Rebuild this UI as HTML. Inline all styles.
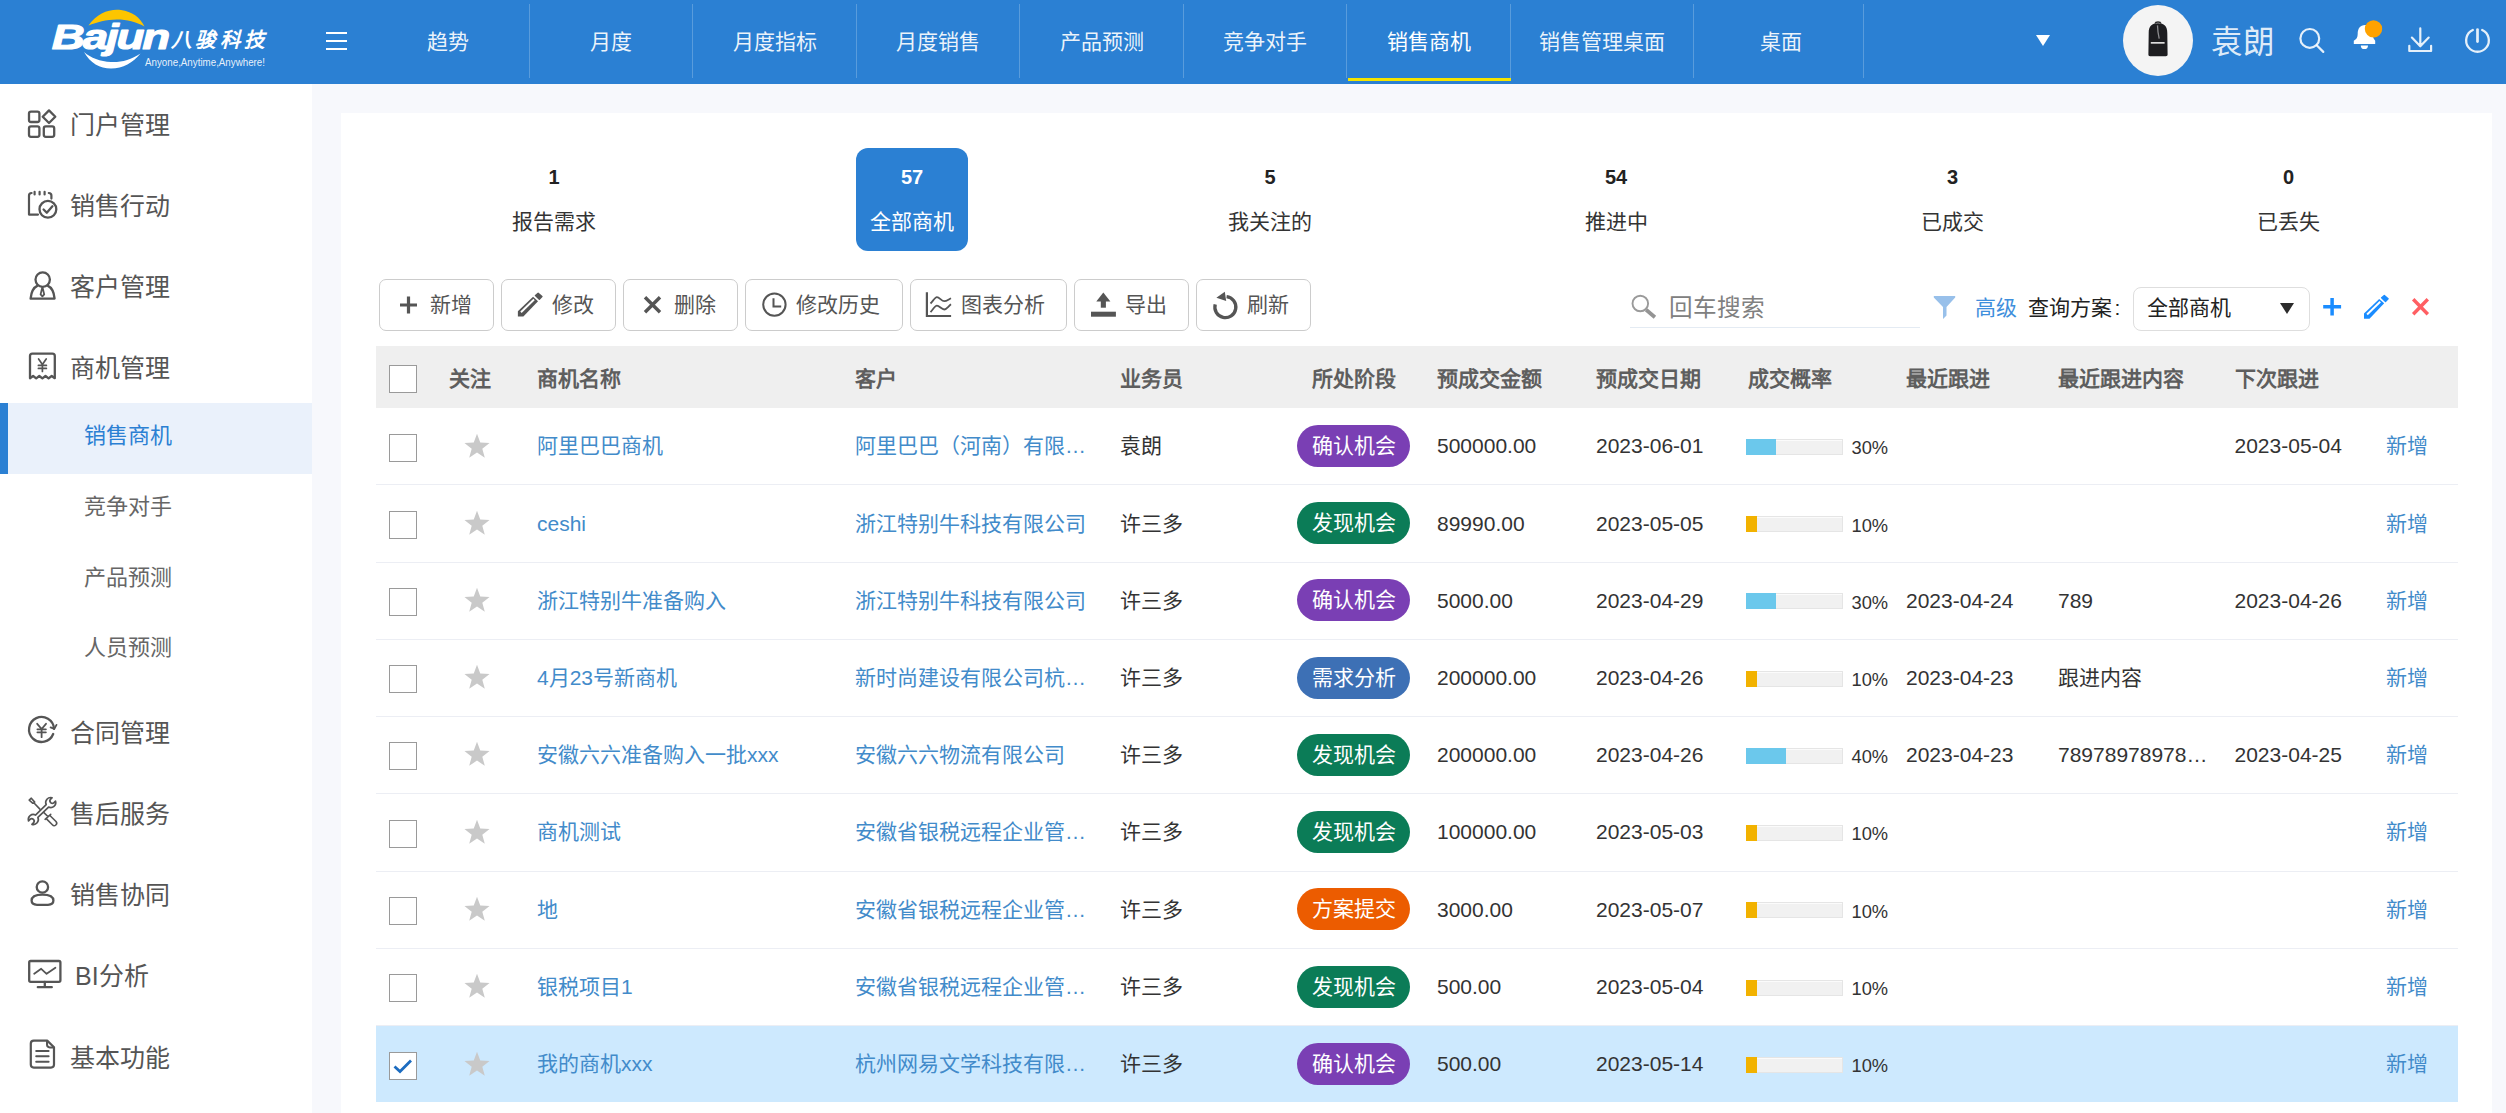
<!DOCTYPE html>
<html lang="zh-CN">
<head>
<meta charset="utf-8">
<title>销售商机</title>
<style>
*{box-sizing:border-box;margin:0;padding:0}
html,body{width:2506px;height:1113px;overflow:hidden}
body{font-family:"Liberation Sans",sans-serif;background:#f7f8fc;color:#333;position:relative;font-size:21px}
a{text-decoration:none;color:inherit}
/* ---------- header ---------- */
#hd{position:absolute;left:0;top:0;width:2506px;height:84px;background:#2b80d3;color:#fff}
#logo{position:absolute;left:0;top:0;width:312px;height:84px}
#burger{position:absolute;left:326px;top:32px;width:21px;height:19px}
#burger i{position:absolute;left:0;width:21px;height:2px;background:#fff}
#nav{position:absolute;left:366px;top:0;height:84px;display:flex}
#nav .t{height:84px;position:relative;text-align:center;font-size:21px;line-height:83.4px;color:rgba(255,255,255,.92);white-space:nowrap}
#nav .t::after{content:"";position:absolute;right:0;top:4px;width:1px;height:74px;background:rgba(255,255,255,.22)}
#nav .t.on{color:#fff}
#nav .t.on::before{content:"";position:absolute;left:1px;right:0;top:78px;height:3px;background:#f5e400}
#dd{position:absolute;left:2036px;top:35px;width:0;height:0;border-left:7.5px solid transparent;border-right:7.5px solid transparent;border-top:11px solid #fff}
#ava{position:absolute;left:2123px;top:5px;width:70px;height:71px;border-radius:50%;background:#f4f4f4;overflow:hidden}
#uname{position:absolute;left:2210.5px;top:23px;font-size:31.5px;line-height:38px;color:rgba(255,255,255,.86);white-space:nowrap}
.hi{position:absolute;top:0;left:0}
/* ---------- sidebar ---------- */
#sb{position:absolute;left:0;top:84px;width:312px;height:1029px;background:#fff}
.mi{position:absolute;left:0;width:312px;height:60px;line-height:60px;font-size:25px;color:#555;padding-left:70px;white-space:nowrap}
.si{position:absolute;left:0;width:312px;height:70px;line-height:68px;font-size:22px;color:#666;padding-left:84px;white-space:nowrap}
.si.on{background:#eaf1fb;color:#2b80d3;border-left:8px solid #2b80d3;padding-left:76px;height:71px;line-height:66px}
/* ---------- main ---------- */
#panel{position:absolute;left:341px;top:113px;width:2151px;height:1000px;background:#fff}
/* stats */
.st{position:absolute;top:35px;height:103px;text-align:center;border-radius:12px;white-space:nowrap}
.st b{display:block;font-size:20px;line-height:24px;margin-top:16.5px;color:#222}
.st span{display:block;font-size:21px;line-height:26px;margin-top:20.3px;color:#333}
.st.on{background:#2b80d3}
.st.on b,.st.on span{color:#fff}
/* toolbar */
.btn{position:absolute;top:166px;height:52px;border:1px solid #ccc;border-radius:7px;background:#fff;font-size:21px;line-height:49px;color:#555;white-space:nowrap}
.btn svg{position:absolute;top:0;left:0}
.btn span{position:absolute;top:0}
#srch{position:absolute;left:1289px;top:213.5px;width:290px;height:1px;background:#e4ebf3}
#ph{position:absolute;left:1327.5px;top:179.5px;font-size:23.6px;line-height:30px;color:#808080;white-space:nowrap}
#adv{position:absolute;left:1633.5px;top:180.8px;font-size:21px;line-height:28px;color:#3f8fdc;white-space:nowrap}
#qlab{position:absolute;left:1686.5px;top:180.8px;font-size:21px;line-height:28px;color:#222;white-space:nowrap}
#sel{position:absolute;left:1792px;top:174px;width:177px;height:44px;border:1px solid #dedede;border-radius:8px;font-size:21px;line-height:40.4px;padding-left:12.5px;color:#222;white-space:nowrap}
#sel i{position:absolute;left:146px;top:15px;width:0;height:0;border-left:7.5px solid transparent;border-right:7.5px solid transparent;border-top:11px solid #2c2c2c}
.tbi{position:absolute;left:0;top:0}
/* table */
#tb{position:absolute;left:35px;top:233px;width:2082px}
#th{position:relative;height:61.6px;background:#efefef;font-weight:bold;color:#5e5e5e;font-size:21px;line-height:61px}
#th span{position:absolute;top:2px;white-space:nowrap}
.cb{position:absolute;left:13px;width:28px;height:28px;border:1.5px solid #9a9a9a;background:#fff}
.r{position:absolute;left:0;width:2082px;border-bottom:1px solid #eceef4;font-size:21px;line-height:76.6px;color:#333}
.r.sel{background:#cde9fe;border-bottom:0}
.r>*{position:absolute;top:0;white-space:nowrap}

.r .star{left:87.7px;width:26px;height:26px}
.r a{color:#428bca}
.c3{left:161px}.c4{left:479px}.c5{left:743.5px}.c7{left:1061px}.c8{left:1220px}.c10{left:1530px}.c11{left:1682px}.c12{left:1858.5px}.c13{left:2010px}
.bd{left:921px;width:113px;height:42px;border-radius:21px;color:#fff;text-align:center;line-height:41px}
.p1{background:#7a3fb4}.p2{background:#0b7c57}.p3{background:#3d70b5}.p4{background:#ec5c00}
.bar{left:1370px;width:97px;height:16px;background:#f1f1f1;border:1px solid #e5e5e5;box-shadow:inset 0 1px 0 #fbfbfb}
.bar i{position:absolute;left:-1px;top:-1px;height:16px}
.bl{background:#6bc8ec}.ye{background:#f2b200}
.pc{left:1475.5px;font-size:18.3px}
</style>
</head>
<body>
<div id="hd">
  <div id="logo">
    <svg width="312" height="84" viewBox="0 0 312 84">
      <path d="M88.5 25.5 C97 13 110 8.5 121 10 C132 11.5 140 17 144.5 26.5 C136 21.5 127 19.4 117 19.4 C106 19.6 97 22 88.5 25.5Z" fill="#fdc500"/>
      <path d="M84 52 C90 63 100 68.5 111 68.5 C123 68.5 133 62.5 140.5 53.5 C131 60 121 62.5 111 62 C100 61.5 91 58 84 52Z" fill="#fff"/>
      <text x="0" y="0" transform="translate(51.8,48.7) scale(1.325,1)" font-family="Liberation Sans, sans-serif" font-weight="bold" font-style="italic" font-size="34.5" fill="#fff" stroke="#fff" stroke-width="1.1" stroke-linejoin="round" letter-spacing="-1.6">Bajun</text>
      <text x="171" y="47.4" font-family="Liberation Sans, sans-serif" font-weight="bold" font-style="italic" font-size="20.5" fill="#fff" letter-spacing="4.3">八骏科技</text>
      <text x="145" y="66" font-family="Liberation Sans, sans-serif" font-size="10.2" fill="#fff" fill-opacity=".9" textLength="120" lengthAdjust="spacingAndGlyphs">Anyone,Anytime,Anywhere!</text>
    </svg>
  </div>
  <div id="burger"><i style="top:0"></i><i style="top:8px"></i><i style="top:16px"></i></div>
  <div id="nav">
    <div class="t" style="width:163.53px">趋势</div>
    <div class="t" style="width:163.53px">月度</div>
    <div class="t" style="width:163.53px">月度指标</div>
    <div class="t" style="width:163.53px">月度销售</div>
    <div class="t" style="width:163.53px">产品预测</div>
    <div class="t" style="width:163.53px">竞争对手</div>
    <div class="t on" style="width:163.53px">销售商机</div>
    <div class="t" style="width:183.6px">销售管理桌面</div>
    <div class="t" style="width:169.3px;padding-left:5px">桌面</div>
  </div>
  <div id="dd"></div>
  <div id="ava">
    <svg width="70" height="71" viewBox="0 0 70 71">
      <path d="M25.7 28 C25.7 21 29 18.2 35 18.2 C41 18.2 44.3 21 44.3 28 L44.6 49.6 C44.6 50.7 44 51.2 42.8 51.2 L27.2 51.2 C26 51.2 25.4 50.7 25.4 49.6Z" fill="#1d1d20"/>
      <path d="M32 18.6 C32.6 16.4 37.4 16.4 38 18.6" fill="none" stroke="#2a2a2c" stroke-width="1.5"/>
      <rect x="27.8" y="37" width="13.8" height="1.7" fill="#dcdcdc"/>
      <path d="M34.5 20.4 L35 27 L36.2 33.6" fill="none" stroke="#8e8e90" stroke-width="1.3"/>
    </svg>
  </div>
  <div id="uname">袁朗</div>
  <svg class="hi" width="2506" height="84" viewBox="0 0 2506 84" fill="none" stroke="#fff" stroke-opacity=".88" stroke-width="2.2" stroke-linecap="round" stroke-linejoin="round">
    <circle cx="2309.8" cy="38.4" r="9.4"/><path d="M2316.7 45.3 L2323.3 51.9"/>
    <path d="M2353.8 43.9 V40.8 C2356.4 39.4 2357.7 37.4 2357.7 34 C2357.7 28.8 2360 25 2365.2 25 C2370.4 25 2372.7 28.8 2372.7 34 C2372.7 37.4 2374 39.4 2375.2 40.8 V43.9Z" fill="#fff" stroke="none"/>
    <path d="M2360.8 45.4 H2368 A3.6 3.6 0 0 1 2360.8 45.4Z" fill="#fff" stroke="none"/>
    <circle cx="2373.5" cy="28.9" r="8.7" fill="#ffa200" stroke="none"/>
    <path d="M2420.3 28.4 V46 M2411.9 37.6 L2420.3 46.3 L2428.7 37.6 M2409.3 45.8 V51 H2431.1 V45.8"/>
    <path d="M2472.8 30.06 A11.35 11.35 0 1 0 2482.2 30.06" stroke-width="2.3"/><path d="M2477.5 29.6 V41.6" stroke-width="2.7"/>
  </svg>
</div>

<div id="sb">
<svg id="sbi" width="312" height="1029" viewBox="0 84 312 1029" fill="none" stroke="#555" stroke-width="2.3" stroke-linejoin="round" stroke-linecap="round" style="position:absolute;left:0;top:0">
  <rect x="29" y="111.6" width="10.4" height="10.4" rx="2"/>
  <rect x="29" y="126.4" width="10.4" height="10.4" rx="2"/>
  <rect x="43.8" y="126.4" width="10.4" height="10.4" rx="2"/>
  <path d="M49 110.4 L55.3 116.7 L49 123 L42.7 116.7Z"/>
  <path d="M38 214.6 H29 V195.6 Q29 193 31.6 193 M48.8 193 Q51.4 193 51.4 195.6 V198.6 M34.6 191.8 V194.4 M39.6 191.8 V194.4 M44.6 191.8 V194.4" stroke-width="2.2"/>
  <circle cx="47.9" cy="209.3" r="8.4"/>
  <path d="M43.6 209.5 L46.8 212.7 L52.4 206.3"/>
  <circle cx="42.7" cy="279.6" r="7.2"/>
  <path d="M37.6 285.6 C33.2 287.6 31.2 292 30.6 298.6 H54.6 C54 292 52 287.6 47.6 285.6"/>
  <path d="M42.4 287 L40.6 294.4 L42.4 296.4 L44.2 294.4Z" stroke-width="1.8"/>
  <path d="M30 378.2 V356 Q30 353.6 32.4 353.6 H52.4 Q54.8 353.6 54.8 356 V378.2 L51.7 376 L48.6 378.4 L45.5 376 L42.4 378.4 L39.3 376 L36.2 378.4 L33.1 376Z"/>
  <path d="M38.6 359 L42.4 364.4 L46.2 359 M42.4 364.4 V371.4 M38.4 365.4 H46.4 M38.4 368.4 H46.4" stroke-width="1.7"/>
  <path d="M54.03 728.8 A12.5 12.5 0 1 0 53.19 734.01"/>
  <path d="M50.6 727.4 L54.3 728.9 L56.5 724.9" stroke-width="1.8"/>
  <path d="M37.2 723.8 L41.6 729 L46 723.8 M41.6 729 V737.2 M37.4 729.3 H45.9 M37.4 732.3 H45.9" stroke-width="1.8"/>
  <path d="M46.18 804.61 A5 5 0 0 1 52.13 797.74 L50.65 799.22 A2.4 2.4 0 0 0 54.05 802.62 L55.53 801.14 A5 5 0 0 1 48.56 807.04 L37.89 817.45 A5 5 0 0 1 31.94 824.32 L33.42 822.84 A2.4 2.4 0 0 0 30.02 819.44 L28.54 820.92 A5 5 0 0 1 35.52 815.02Z" stroke-width="1.7"/>
  <path d="M29.2 800.1 L31.3 798.2 L34.7 802.1 L32.9 803.3Z M33.8 802.8 L39.9 809.1 M43.9 812.7 L47.9 816.5 M45.1 819.3 L50.7 814.3 M49.9 815.5 L56 821.5 A2.43 2.43 0 0 1 52.35 824.8 L46.5 818.9" stroke-width="1.6"/>
  <circle cx="42.4" cy="887" r="5.7"/>
  <path d="M31.6 900.6 C31.6 896.6 36 894.6 42.4 894.6 C48.8 894.6 53.4 896.6 53.4 900.6 C53.4 903.4 51.4 904.8 48 904.8 H37 C33.6 904.8 31.6 903.4 31.6 900.6Z"/>
  <rect x="29.2" y="961" width="31.2" height="20.8" rx="1.5"/>
  <path d="M44.8 982 V987 M37.8 987.2 H51.8"/>
  <path d="M34.2 973.8 L41.2 968.8 L46.6 973.8 L55.4 967.8" stroke-width="1.8"/>
  <path d="M33.8 1040.6 H47.2 L54 1047.2 V1064.6 Q54 1067.6 51 1067.6 H33.8 Q30.8 1067.6 30.8 1064.6 V1043.6 Q30.8 1040.6 33.8 1040.6Z" stroke-width="2.2"/>
  <path d="M47 1041 V1044.6 Q47 1047.4 49.8 1047.4 H53.6" stroke-width="2"/>
  <path d="M36.2 1050.9 H48.6 M36.2 1056.3 H48.6 M36.2 1061.7 H48.6" stroke-width="2"/>
</svg>
  <div class="mi" style="top:11px">门户管理</div>
  <div class="mi" style="top:92px">销售行动</div>
  <div class="mi" style="top:173px">客户管理</div>
  <div class="mi" style="top:254px">商机管理</div>
  <div class="si on" style="top:319px">销售商机</div>
  <div class="si" style="top:389px">竞争对手</div>
  <div class="si" style="top:460px">产品预测</div>
  <div class="si" style="top:530px">人员预测</div>
  <div class="mi" style="top:619px">合同管理</div>
  <div class="mi" style="top:700px">售后服务</div>
  <div class="mi" style="top:781px">销售协同</div>
  <div class="mi" style="top:862px;padding-left:75px">BI分析</div>
  <div class="mi" style="top:944px">基本功能</div>
</div>

<div id="panel">
<div class="st" style="left:157px;width:112px"><b>1</b><span>报告需求</span></div>
<div class="st on" style="left:515px;width:112px"><b>57</b><span>全部商机</span></div>
<div class="st" style="left:873px;width:112px"><b>5</b><span>我关注的</span></div>
<div class="st" style="left:1229.5px;width:91px"><b>54</b><span>推进中</span></div>
<div class="st" style="left:1566px;width:91px"><b>3</b><span>已成交</span></div>
<div class="st" style="left:1902px;width:91px"><b>0</b><span>已丢失</span></div>
<div class="btn" style="left:38px;width:114.5px"><svg width="114.5" height="50" viewBox="0 0 114.5 50"><path d="M20 25 H37 M28.5 16.5 V33.5" stroke="#555" fill="none" stroke-width="3.2"/></svg><span style="left:50px">新增</span></div>
<div class="btn" style="left:160px;width:114.5px"><svg width="114.5" height="50" viewBox="0 0 114.5 50"><polygon points="15.85,31.20 31.05,16.84 36.05,21.15 21.35,36.60 15.85,36.60" fill="#555"/><path d="M18.95 32.30 L32.05 19.50" stroke="#fff" stroke-width="1.9" fill="none"/><polygon points="33.45,15.50 36.15,13.30 39.95,16.60 37.35,19.30" fill="#555" stroke="#555" stroke-width="1.4" stroke-linejoin="round"/></svg><span style="left:50px">修改</span></div>
<div class="btn" style="left:282px;width:114.5px"><svg width="114.5" height="50" viewBox="0 0 114.5 50"><path d="M21 17.2 L36 32.2 M36 17.2 L21 32.2" stroke="#555" fill="none" stroke-width="3.4"/></svg><span style="left:50px">删除</span></div>
<div class="btn" style="left:404px;width:158px"><svg width="158" height="50" viewBox="0 0 158 50"><circle cx="28.4" cy="24.6" r="11.2" stroke="#555" fill="none" stroke-width="2"/><path d="M27.5 18.3 V26.4 H35.2" stroke="#555" fill="none" stroke-width="2"/></svg><span style="left:50px">修改历史</span></div>
<div class="btn" style="left:569px;width:157px"><svg width="157" height="50" viewBox="0 0 157 50"><path d="M15.9 12.3 V36 H40.1" stroke="#555" fill="none" stroke-width="2.2"/><path d="M19.5 23.5 C22 21 24 17.1 25.9 17.1 C28.5 17.1 30.5 21.2 33.3 21.2 C35.5 21.2 37.5 19.5 40 18.3 M19.5 32.1 C22 29.5 24 25.7 25.9 25.7 C28.5 25.7 30.5 29.5 33.3 29.5 C35.5 29.5 37.5 26 40 24.3" stroke="#555" fill="none" stroke-width="1.8"/></svg><span style="left:49.5px">图表分析</span></div>
<div class="btn" style="left:733px;width:114.5px"><svg width="114.5" height="50" viewBox="0 0 114.5 50"><rect x="16" y="31.7" width="24.9" height="5" fill="#555"/><rect x="25.8" y="21" width="5.1" height="6.7" fill="#555"/><path d="M28.3 12.6 L35.4 21.4 H21.3Z" fill="#555"/></svg><span style="left:49.5px">导出</span></div>
<div class="btn" style="left:855px;width:114.5px"><svg width="114.5" height="50" viewBox="0 0 114.5 50"><path d="M29.6 16.7 A10.5 10.5 0 1 1 18.2 24.4" stroke="#555" fill="none" stroke-width="3.3"/><path d="M19.4 17.8 L27.8 11.8 L29.2 21Z" fill="#555"/></svg><span style="left:50px">刷新</span></div>
<div id="srch"></div><div id="ph">回车搜索</div>
<div id="adv">高级</div><div id="qlab">查询方案<span style="margin-left:3px">:</span></div>
<div id="sel">全部商机<i></i></div>
<svg class="tbi" width="2151" height="260" viewBox="341 113 2151 260">
  <circle cx="1640.3" cy="303.5" r="7.8" fill="none" stroke="#9a9a9a" stroke-width="1.9"/>
  <path d="M1646.1 309.8 L1654.9 317.2" stroke="#949494" stroke-width="3.8"/>
  <path d="M1933.8 295.9 H1955.2 V297.4 L1946.5 307 V315.4 L1943 318.9 V307 L1933.8 297.4Z" fill="#98c0ea"/>
  <path d="M2323.2 306.8 H2341.1 M2332.1 298 V315.6" stroke="#1a8cff" stroke-width="3.5"/>
  <polygon points="2364.00,313.40 2379.20,299.04 2384.20,303.35 2369.50,318.80 2364.00,318.80" fill="#1a8cff"/><path d="M2367.10 314.50 L2380.20 301.70" stroke="#fff" stroke-width="1.9" fill="none"/><polygon points="2381.60,297.70 2384.30,295.50 2388.10,298.80 2385.50,301.50" fill="#1a8cff" stroke="#1a8cff" stroke-width="1.4" stroke-linejoin="round"/>
  <path d="M2413.2 299.3 L2427.8 314.3 M2427.8 299.3 L2413.2 314.3" stroke="#ff5f63" stroke-width="3.4"/>
</svg>
<div id="tb">
<div id="th"><div class="cb" style="top:19px"></div><span style="left:73px">关注</span><span style="left:161px">商机名称</span><span style="left:479px">客户</span><span style="left:743.5px">业务员</span><span style="left:936px">所处阶段</span><span style="left:1061px">预成交金额</span><span style="left:1220px">预成交日期</span><span style="left:1371.5px">成交概率</span><span style="left:1530px">最近跟进</span><span style="left:1682px">最近跟进内容</span><span style="left:1858.5px">下次跟进</span></div>
<div class="r" style="top:62px;height:77px"><div class="cb" style="top:26px"></div><svg class="star" style="top:25.1px" viewBox="0 0 24 24"><path d="M12 0.8 L15 8.8 L23.6 9.2 L16.9 14.6 L19.2 22.9 L12 18.1 L4.8 22.9 L7.1 14.6 L0.4 9.2 L9 8.8Z" fill="#c9c9c9"/></svg><a class="c3" style="top:0px">阿里巴巴商机</a><a class="c4" style="top:0px">阿里巴巴（河南）有限…</a><span class="c5" style="top:0px">袁朗</span><span class="bd p1" style="top:17px">确认机会</span><span class="c7" style="top:0px">500000.00</span><span class="c8" style="top:0px">2023-06-01</span><span class="bar" style="top:31px"><i class="bl" style="width:30px"></i></span><span class="pc" style="top:2px">30%</span><span class="c12" style="top:0px">2023-05-04</span><a class="c13" style="top:0px">新增</a></div>
<div class="r" style="top:139px;height:78px"><div class="cb" style="top:26px"></div><svg class="star" style="top:25.1px" viewBox="0 0 24 24"><path d="M12 0.8 L15 8.8 L23.6 9.2 L16.9 14.6 L19.2 22.9 L12 18.1 L4.8 22.9 L7.1 14.6 L0.4 9.2 L9 8.8Z" fill="#c9c9c9"/></svg><a class="c3" style="top:1px">ceshi</a><a class="c4" style="top:1px">浙江特别牛科技有限公司</a><span class="c5" style="top:1px">许三多</span><span class="bd p2" style="top:17px">发现机会</span><span class="c7" style="top:1px">89990.00</span><span class="c8" style="top:1px">2023-05-05</span><span class="bar" style="top:31px"><i class="ye" style="width:11px"></i></span><span class="pc" style="top:3px">10%</span><a class="c13" style="top:1px">新增</a></div>
<div class="r" style="top:217px;height:77px"><div class="cb" style="top:25px"></div><svg class="star" style="top:24.1px" viewBox="0 0 24 24"><path d="M12 0.8 L15 8.8 L23.6 9.2 L16.9 14.6 L19.2 22.9 L12 18.1 L4.8 22.9 L7.1 14.6 L0.4 9.2 L9 8.8Z" fill="#c9c9c9"/></svg><a class="c3" style="top:0px">浙江特别牛准备购入</a><a class="c4" style="top:0px">浙江特别牛科技有限公司</a><span class="c5" style="top:0px">许三多</span><span class="bd p1" style="top:16px">确认机会</span><span class="c7" style="top:0px">5000.00</span><span class="c8" style="top:0px">2023-04-29</span><span class="bar" style="top:30px"><i class="bl" style="width:30px"></i></span><span class="pc" style="top:2px">30%</span><span class="c10" style="top:0px">2023-04-24</span><span class="c11" style="top:0px">789</span><span class="c12" style="top:0px">2023-04-26</span><a class="c13" style="top:0px">新增</a></div>
<div class="r" style="top:294px;height:77px"><div class="cb" style="top:25px"></div><svg class="star" style="top:24.1px" viewBox="0 0 24 24"><path d="M12 0.8 L15 8.8 L23.6 9.2 L16.9 14.6 L19.2 22.9 L12 18.1 L4.8 22.9 L7.1 14.6 L0.4 9.2 L9 8.8Z" fill="#c9c9c9"/></svg><a class="c3" style="top:0px">4月23号新商机</a><a class="c4" style="top:0px">新时尚建设有限公司杭…</a><span class="c5" style="top:0px">许三多</span><span class="bd p3" style="top:17px">需求分析</span><span class="c7" style="top:0px">200000.00</span><span class="c8" style="top:0px">2023-04-26</span><span class="bar" style="top:31px"><i class="ye" style="width:11px"></i></span><span class="pc" style="top:2px">10%</span><span class="c10" style="top:0px">2023-04-23</span><span class="c11" style="top:0px">跟进内容</span><a class="c13" style="top:0px">新增</a></div>
<div class="r" style="top:371px;height:77px"><div class="cb" style="top:25px"></div><svg class="star" style="top:24.1px" viewBox="0 0 24 24"><path d="M12 0.8 L15 8.8 L23.6 9.2 L16.9 14.6 L19.2 22.9 L12 18.1 L4.8 22.9 L7.1 14.6 L0.4 9.2 L9 8.8Z" fill="#c9c9c9"/></svg><a class="c3" style="top:0px">安徽六六准备购入一批xxx</a><a class="c4" style="top:0px">安徽六六物流有限公司</a><span class="c5" style="top:0px">许三多</span><span class="bd p2" style="top:17px">发现机会</span><span class="c7" style="top:0px">200000.00</span><span class="c8" style="top:0px">2023-04-26</span><span class="bar" style="top:31px"><i class="bl" style="width:40px"></i></span><span class="pc" style="top:2px">40%</span><span class="c10" style="top:0px">2023-04-23</span><span class="c11" style="top:0px">78978978978…</span><span class="c12" style="top:0px">2023-04-25</span><a class="c13" style="top:0px">新增</a></div>
<div class="r" style="top:448px;height:78px"><div class="cb" style="top:26px"></div><svg class="star" style="top:25.1px" viewBox="0 0 24 24"><path d="M12 0.8 L15 8.8 L23.6 9.2 L16.9 14.6 L19.2 22.9 L12 18.1 L4.8 22.9 L7.1 14.6 L0.4 9.2 L9 8.8Z" fill="#c9c9c9"/></svg><a class="c3" style="top:0px">商机测试</a><a class="c4" style="top:0px">安徽省银税远程企业管…</a><span class="c5" style="top:0px">许三多</span><span class="bd p2" style="top:17px">发现机会</span><span class="c7" style="top:0px">100000.00</span><span class="c8" style="top:0px">2023-05-03</span><span class="bar" style="top:31px"><i class="ye" style="width:11px"></i></span><span class="pc" style="top:2px">10%</span><a class="c13" style="top:0px">新增</a></div>
<div class="r" style="top:526px;height:77px"><div class="cb" style="top:25px"></div><svg class="star" style="top:24.1px" viewBox="0 0 24 24"><path d="M12 0.8 L15 8.8 L23.6 9.2 L16.9 14.6 L19.2 22.9 L12 18.1 L4.8 22.9 L7.1 14.6 L0.4 9.2 L9 8.8Z" fill="#c9c9c9"/></svg><a class="c3" style="top:0px">地</a><a class="c4" style="top:0px">安徽省银税远程企业管…</a><span class="c5" style="top:0px">许三多</span><span class="bd p4" style="top:16px">方案提交</span><span class="c7" style="top:0px">3000.00</span><span class="c8" style="top:0px">2023-05-07</span><span class="bar" style="top:30px"><i class="ye" style="width:11px"></i></span><span class="pc" style="top:2px">10%</span><a class="c13" style="top:0px">新增</a></div>
<div class="r" style="top:603px;height:77px"><div class="cb" style="top:25px"></div><svg class="star" style="top:24.1px" viewBox="0 0 24 24"><path d="M12 0.8 L15 8.8 L23.6 9.2 L16.9 14.6 L19.2 22.9 L12 18.1 L4.8 22.9 L7.1 14.6 L0.4 9.2 L9 8.8Z" fill="#c9c9c9"/></svg><a class="c3" style="top:0px">银税项目1</a><a class="c4" style="top:0px">安徽省银税远程企业管…</a><span class="c5" style="top:0px">许三多</span><span class="bd p2" style="top:17px">发现机会</span><span class="c7" style="top:0px">500.00</span><span class="c8" style="top:0px">2023-05-04</span><span class="bar" style="top:31px"><i class="ye" style="width:11px"></i></span><span class="pc" style="top:2px">10%</span><a class="c13" style="top:0px">新增</a></div>
<div class="r sel" style="top:680px;height:76px"><div class="cb" style="top:26px"><svg width="25" height="25" viewBox="0 0 25 25" style="position:absolute;left:0;top:0"><path d="M4.5 13.5 L10 18.5 L21 7.5" fill="none" stroke="#1c6cc0" stroke-width="2.8"/></svg></div><svg class="star" style="top:25.1px" viewBox="0 0 24 24"><path d="M12 0.8 L15 8.8 L23.6 9.2 L16.9 14.6 L19.2 22.9 L12 18.1 L4.8 22.9 L7.1 14.6 L0.4 9.2 L9 8.8Z" fill="#c9c9c9"/></svg><a class="c3" style="top:0px">我的商机xxx</a><a class="c4" style="top:0px">杭州网易文学科技有限…</a><span class="c5" style="top:0px">许三多</span><span class="bd p1" style="top:17px">确认机会</span><span class="c7" style="top:0px">500.00</span><span class="c8" style="top:0px">2023-05-14</span><span class="bar" style="top:31px"><i class="ye" style="width:11px"></i></span><span class="pc" style="top:2px">10%</span><a class="c13" style="top:0px">新增</a></div>
</div>
</div>
</body>
</html>
